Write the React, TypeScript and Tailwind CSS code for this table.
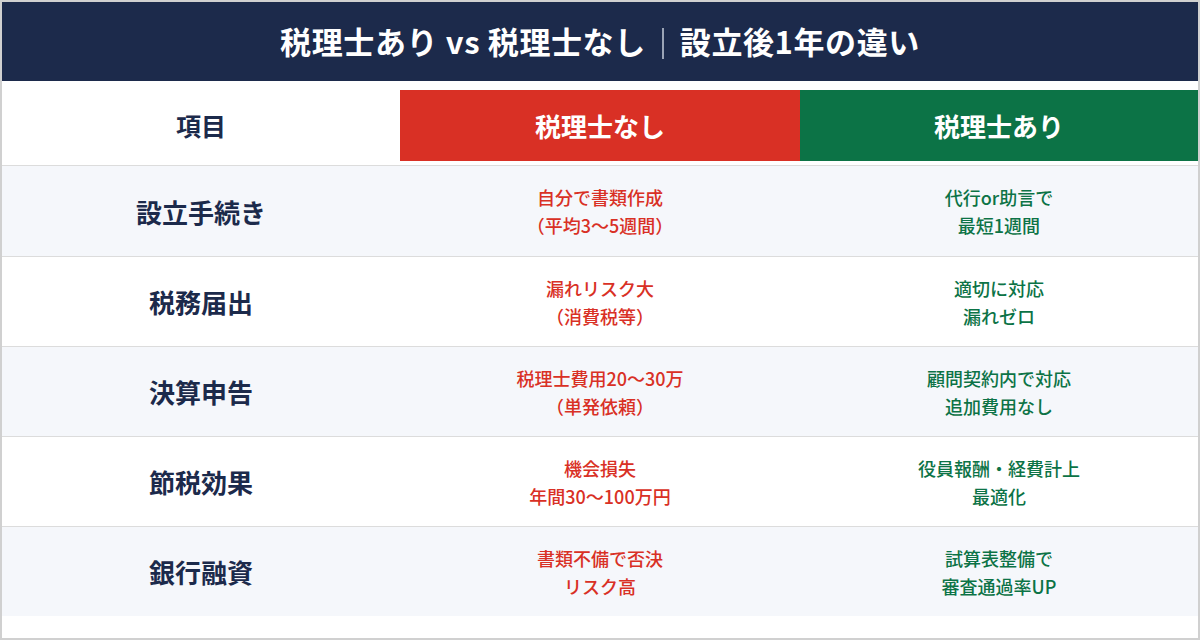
const rows = [
  { label: "設立手続き", without: ["自分で書類作成", "（平均3〜5週間）"], with: ["代行or助言で", "最短1週間"] },
  { label: "税務届出", without: ["漏れリスク大", "（消費税等）"], with: ["適切に対応", "漏れゼロ"] },
  { label: "決算申告", without: ["税理士費用20〜30万", "（単発依頼）"], with: ["顧問契約内で対応", "追加費用なし"] },
  { label: "節税効果", without: ["機会損失", "年間30〜100万円"], with: ["役員報酬・経費計上", "最適化"] },
  { label: "銀行融資", without: ["書類不備で否決", "リスク高"], with: ["試算表整備で", "審査通過率UP"] },
];

export default function App() {
  return (
    <div
      className="w-[1200px] h-[640px] border-2 border-[#d0d0d0] bg-white flex flex-col overflow-hidden"
      style={{ fontFamily: '"Noto Sans CJK JP", "Noto Sans", sans-serif' }}
    >
      {/* title bar */}
      <div className="h-[79px] bg-[#1c2a4b] flex items-center justify-center">
        <h1 className="text-white font-bold text-[31px] tracking-[0.6px]">
          税理士あり vs 税理士なし
          <span className="inline-block w-[2px] h-[31px] bg-[#9aa3b5] mx-[16px] align-[-5px]" />
          設立後1年の違い
        </h1>
      </div>

      {/* column headers */}
      <div className="grid grid-cols-[398px_400px_398px] pt-[9px] pb-[4px] border-b border-[#dcdcdc]">
        <div className="h-[71px] flex items-center justify-center text-[#1c2a4b] font-bold text-[25px]">
          項目
        </div>
        <div className="h-[71px] bg-[#d93025] flex items-center justify-center text-white font-bold text-[26px]">
          税理士なし
        </div>
        <div className="h-[71px] bg-[#0c7346] flex items-center justify-center text-white font-bold text-[26px]">
          税理士あり
        </div>
      </div>

      {/* rows */}
      {rows.map((r, i) => (
        <div
          key={r.label}
          className={
            "grid grid-cols-[398px_400px_398px] h-[90px] " +
            (i > 0 ? "border-t border-[#dcdcdc] " : "h-[89px] ") +
            (i % 2 === 0 ? "bg-[#f5f7fb]" : "bg-white")
          }
        >
          <div className="flex items-center justify-center text-[#1c2a4b] font-bold text-[26px]">
            {r.label}
          </div>
          <div className="flex flex-col items-center justify-center text-[#d93025] font-medium text-[18px] leading-[28px]">
            <span>{r.without[0]}</span>
            <span>{r.without[1]}</span>
          </div>
          <div className="flex flex-col items-center justify-center text-[#0c7346] font-medium text-[18px] leading-[28px]">
            <span>{r.with[0]}</span>
            <span>{r.with[1]}</span>
          </div>
        </div>
      ))}
    </div>
  );
}
